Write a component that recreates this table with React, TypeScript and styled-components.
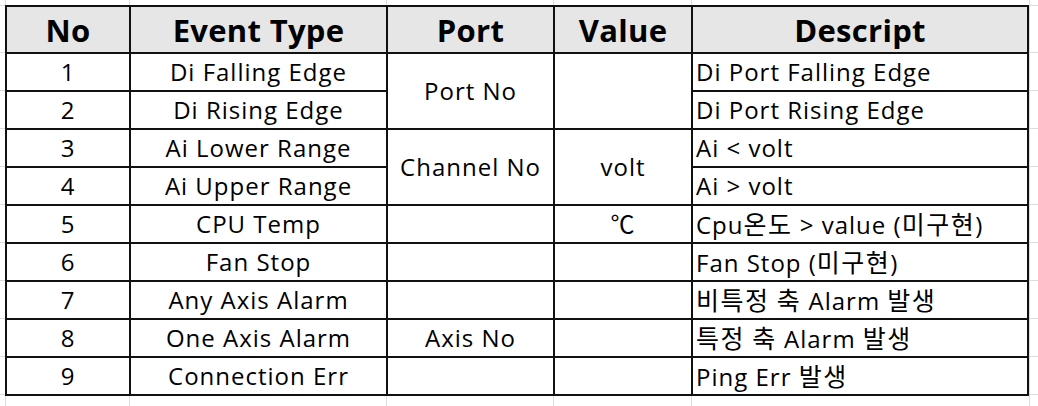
import React from "react";
import styled, { createGlobalStyle } from "styled-components";

const FAINT = "#dcdcdc";
const LINE = "#111";

const GlobalStyle = createGlobalStyle`
  html, body { margin: 0; padding: 0; background: #fff; }
  body { font-family: "Open Sans", "Noto Sans CJK KR", sans-serif; color: #000; }
`;

const Page = styled.div`
  display: grid;
  grid-template-columns: 5px 1024px 1fr;
  grid-template-rows: 5px 391px 1fr;
  width: 1038px;
  height: 406px;
  overflow: hidden;
`;

const ColStrip = styled.div<{ $row: number }>`
  grid-column: 2;
  grid-row: ${(p) => p.$row};
  display: grid;
  grid-template-columns: 124px 257px 167px 138px 338px;
`;

const RowStrip = styled.div<{ $col: number }>`
  grid-column: ${(p) => p.$col};
  grid-row: 2;
  display: grid;
  grid-template-rows: 47px repeat(9, 38px) 1fr;
`;

const VMark = styled.div`
  border-left: 1px solid ${FAINT};
`;

const HMark = styled.div<{ $edge?: boolean }>`
  border-top: 1px solid ${FAINT};
  ${(p) => (p.$edge ? `border-left: 1px solid ${FAINT};` : "")}
`;

const Corner = styled.div<{ $row: number }>`
  grid-column: 3;
  grid-row: ${(p) => p.$row};
  border-left: 1px solid ${FAINT};
`;

const Table = styled.div`
  grid-column: 2;
  grid-row: 2;
  display: grid;
  grid-template-columns: 122px 255px 165px 136px 334px;
  grid-template-rows: 45px repeat(9, 36px);
  gap: 2px;
  padding: 2px;
  background: ${LINE};
`;

const HeadCell = styled.div`
  background: #e7e6e6;
  display: flex;
  align-items: center;
  justify-content: center;
  font-weight: 700;
  font-size: 31px;
  letter-spacing: 0.3px;
  line-height: 1;
  padding-top: 1px;
`;

const Cell = styled.div<{ $row: number; $col: number; $span?: number; $left?: boolean }>`
  grid-row: ${(p) => p.$row} / span ${(p) => p.$span ?? 1};
  grid-column: ${(p) => p.$col};
  background: #fff;
  display: flex;
  align-items: center;
  justify-content: ${(p) => (p.$left ? "flex-start" : "center")};
  padding-left: ${(p) => (p.$left ? "3px" : "0")};
  font-size: 24px;
  letter-spacing: 1px;
  line-height: 1;
`;

const Label = styled.span`
  white-space: pre;
`;

const Hangul = styled.span`
  font-family: "Noto Sans CJK KR", sans-serif;
  font-size: 25px;
  letter-spacing: 1.5px;
`;

type C = { col: number; row: number; span?: number; text: string; left?: boolean };

const headers = ["No", "Event Type", "Port", "Value", "Descript"];

const events = [
  "Di Falling Edge",
  "Di Rising Edge",
  "Ai Lower Range",
  "Ai Upper Range",
  "CPU Temp",
  "Fan Stop",
  "Any Axis Alarm",
  "One Axis Alarm",
  "Connection Err",
];

const descripts = [
  "Di Port Falling Edge",
  "Di Port Rising Edge",
  "Ai < volt",
  "Ai > volt",
  "Cpu온도 > value (미구현)",
  "Fan Stop (미구현)",
  "비특정 축 Alarm 발생",
  "특정 축 Alarm 발생",
  "Ping Err 발생",
];

const ports: C[] = [
  { col: 3, row: 2, span: 2, text: "Port No" },
  { col: 3, row: 4, span: 2, text: "Channel No" },
  { col: 3, row: 6, text: "" },
  { col: 3, row: 7, text: "" },
  { col: 3, row: 8, text: "" },
  { col: 3, row: 9, text: "Axis No" },
  { col: 3, row: 10, text: "" },
];

const values: C[] = [
  { col: 4, row: 2, span: 2, text: "" },
  { col: 4, row: 4, span: 2, text: "volt" },
  { col: 4, row: 6, text: "℃" },
  { col: 4, row: 7, text: "" },
  { col: 4, row: 8, text: "" },
  { col: 4, row: 9, text: "" },
  { col: 4, row: 10, text: "" },
];

const cells: C[] = [
  ...events.flatMap((e, i) => [
    { col: 1, row: i + 2, text: String(i + 1) },
    { col: 2, row: i + 2, text: e },
  ]),
  ...ports,
  ...values,
  ...descripts.map((d, i) => ({ col: 5, row: i + 2, text: d, left: true })),
];

const colMarks = [0, 1, 2, 3, 4];
const rowMarks = [0, 1, 2, 3, 4, 5, 6, 7, 8, 9, 10];

function renderText(text: string) {
  const parts = text.split(/([\uAC00-\uD7A3]+)/);
  return parts.map((part, i) =>
    /[\uAC00-\uD7A3]/.test(part) ? <Hangul key={i}>{part}</Hangul> : <React.Fragment key={i}>{part}</React.Fragment>
  );
}

export default function App() {
  return (
    <>
      <GlobalStyle />
      <Page>
        <ColStrip $row={1}>
          {colMarks.map((k) => (
            <VMark key={k} />
          ))}
        </ColStrip>
        <RowStrip $col={1}>
          {rowMarks.map((k) => (
            <HMark key={k} />
          ))}
        </RowStrip>
        <Table>
          {headers.map((h) => (
            <HeadCell key={h}>{h}</HeadCell>
          ))}
          {cells.map((c) => (
            <Cell key={`${c.col}-${c.row}`} $col={c.col} $row={c.row} $span={c.span} $left={c.left}>
              {c.text ? <Label>{renderText(c.text)}</Label> : null}
            </Cell>
          ))}
        </Table>
        <RowStrip $col={3}>
          {rowMarks.map((k) => (
            <HMark key={k} $edge />
          ))}
        </RowStrip>
        <Corner $row={1} />
        <Corner $row={3} />
        <ColStrip $row={3}>
          {colMarks.map((k) => (
            <VMark key={k} />
          ))}
        </ColStrip>
      </Page>
    </>
  );
}
